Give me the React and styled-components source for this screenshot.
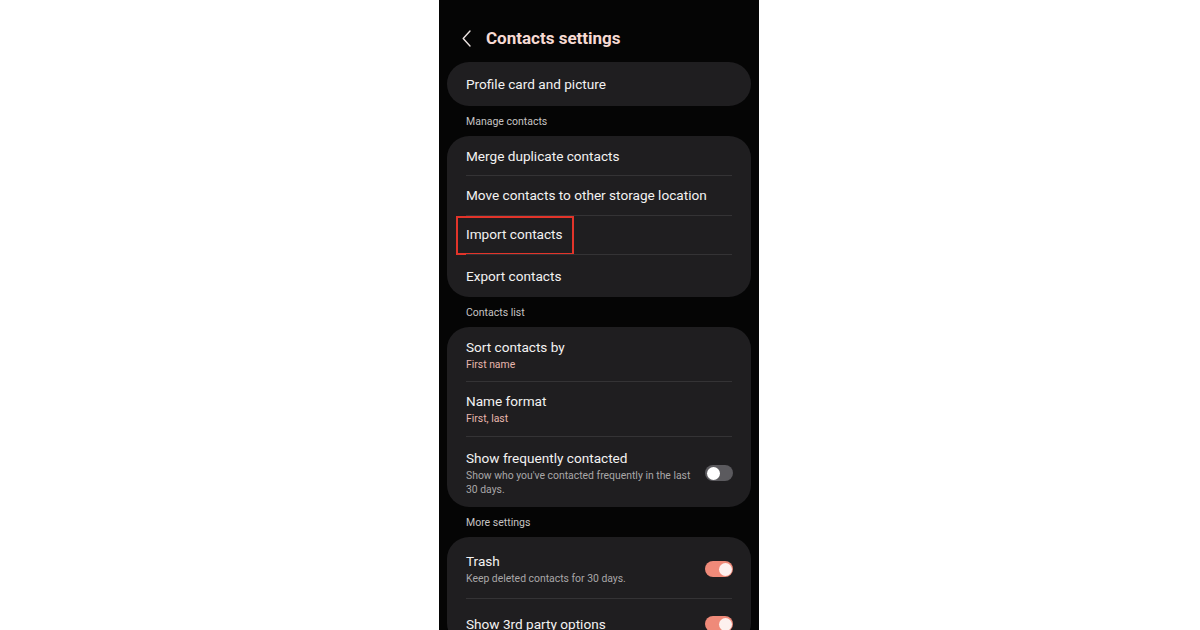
import styled, { createGlobalStyle } from "styled-components";

const GlobalStyle = createGlobalStyle`
  html, body {
    margin: 0;
    padding: 0;
    background: #ffffff;
  }
  body {
    font-family: Roboto, "Noto Sans", sans-serif;
    -webkit-font-smoothing: antialiased;
  }
`;

const Page = styled.div`
  display: flex;
  width: 1200px;
  height: 630px;
  padding-left: 439px;
  box-sizing: border-box;
  overflow: hidden;
`;

const Screen = styled.div`
  width: 320px;
  height: 630px;
  background: #050505;
  padding: 0 8px;
  box-sizing: border-box;
  overflow: hidden;
`;

const Header = styled.header`
  display: flex;
  align-items: center;
  height: 62px;
  padding: 14px 0 0 15px;
  box-sizing: border-box;
`;

const BackButton = styled.button`
  display: flex;
  align-items: center;
  justify-content: center;
  width: 9px;
  height: 24px;
  padding: 0;
  margin-right: 15px;
  border: none;
  background: none;
  color: #ece3e1;
`;

const Title = styled.h1`
  margin: 0;
  font-size: 17px;
  font-weight: 700;
  color: #f7dad3;
`;

const Card = styled.section`
  background: #1f1e20;
  border-radius: 22px;
  overflow: hidden;
`;

const SectionLabel = styled.div`
  display: flex;
  align-items: center;
  height: 30px;
  padding-left: 19px;
  font-size: 10.5px;
  color: #c6c3c3;
`;

const Row = styled.div`
  position: relative;
  display: flex;
  align-items: center;
  min-height: ${(p) => p.$height || 39}px;
  padding: ${(p) => p.$top || 0}px 18px ${(p) => p.$bottom || 0}px 19px;
  box-sizing: border-box;

  &:not(:first-child)::before {
    content: "";
    position: absolute;
    top: 0;
    left: 19px;
    right: 19px;
    height: 1px;
    background: #343335;
  }
`;

const RowText = styled.div`
  flex: 1;
  min-width: 0;
  padding-right: 14px;
`;

const RowTitle = styled.div`
  font-size: 13.6px;
  line-height: 18px;
  color: #f3f2f2;
`;

const RowValue = styled.div`
  margin-top: 2px;
  font-size: 10.4px;
  line-height: 14px;
  color: #e8b7ae;
`;

const RowDesc = styled.div`
  margin-top: 2px;
  font-size: 10.4px;
  line-height: 14px;
  color: #a9a7a8;
`;

const Highlight = styled.span`
  position: relative;

  &::after {
    content: "";
    position: absolute;
    left: -10px;
    right: -11px;
    top: -10px;
    bottom: -13px;
    border: 2px solid #e2342a;
  }
`;

const Divider = styled.span`
  align-self: stretch;
  width: 1px;
  margin: 15px 7px 0 0;
  background: #3a393b;
`;

const Track = styled.span`
  position: relative;
  flex-shrink: 0;
  width: 28px;
  height: 16px;
  border-radius: 8px;
  background: ${(p) => (p.$on ? "#ef8a79" : "#5b5a5e")};
`;

const Knob = styled.span`
  position: absolute;
  top: 1.5px;
  left: ${(p) => (p.$on ? "13.5px" : "1.5px")};
  width: 13px;
  height: 13px;
  border-radius: 50%;
  background: ${(p) => (p.$on ? "#fdf0ee" : "#ffffff")};
`;

function Toggle({ on }) {
  return (
    <Track $on={on}>
      <Knob $on={on} />
    </Track>
  );
}

function ChevronLeft() {
  return (
    <svg width="9" height="17" viewBox="0 0 9 17" fill="none">
      <path d="M8 1L1.2 8.5L8 16" stroke="currentColor" strokeWidth="1.4" strokeLinecap="round" strokeLinejoin="round" />
    </svg>
  );
}

export default function App() {
  return (
    <>
      <GlobalStyle />
      <Page>
        <Screen>
          <Header>
            <BackButton aria-label="Back">
              <ChevronLeft />
            </BackButton>
            <Title>Contacts settings</Title>
          </Header>

          <Card>
            <Row $height={44}>
              <RowTitle>Profile card and picture</RowTitle>
            </Row>
          </Card>

          <SectionLabel>Manage contacts</SectionLabel>
          <Card>
            <Row>
              <RowTitle>Merge duplicate contacts</RowTitle>
            </Row>
            <Row $height={39.5}>
              <RowTitle>Move contacts to other storage location</RowTitle>
            </Row>
            <Row $height={39.5}>
              <RowTitle>
                <Highlight>Import contacts</Highlight>
              </RowTitle>
            </Row>
            <Row $height={43}>
              <RowTitle>Export contacts</RowTitle>
            </Row>
          </Card>

          <SectionLabel>Contacts list</SectionLabel>
          <Card>
            <Row $top={11} $bottom={9}>
              <RowText>
                <RowTitle>Sort contacts by</RowTitle>
                <RowValue>First name</RowValue>
              </RowText>
            </Row>
            <Row $top={11} $bottom={10}>
              <RowText>
                <RowTitle>Name format</RowTitle>
                <RowValue>First, last</RowValue>
              </RowText>
            </Row>
            <Row $top={13} $bottom={10}>
              <RowText>
                <RowTitle>Show frequently contacted</RowTitle>
                <RowDesc>Show who you've contacted frequently in the last 30 days.</RowDesc>
              </RowText>
              <Toggle on={false} />
            </Row>
          </Card>

          <SectionLabel>More settings</SectionLabel>
          <Card>
            <Row $top={15} $bottom={12}>
              <RowText>
                <RowTitle>Trash</RowTitle>
                <RowDesc>Keep deleted contacts for 30 days.</RowDesc>
              </RowText>
              <Toggle on />
            </Row>
            <Row $top={17} $bottom={12}>
              <RowText>
                <RowTitle>Show 3rd party options</RowTitle>
              </RowText>
              <Divider />
              <Toggle on />
            </Row>
          </Card>
        </Screen>
      </Page>
    </>
  );
}
